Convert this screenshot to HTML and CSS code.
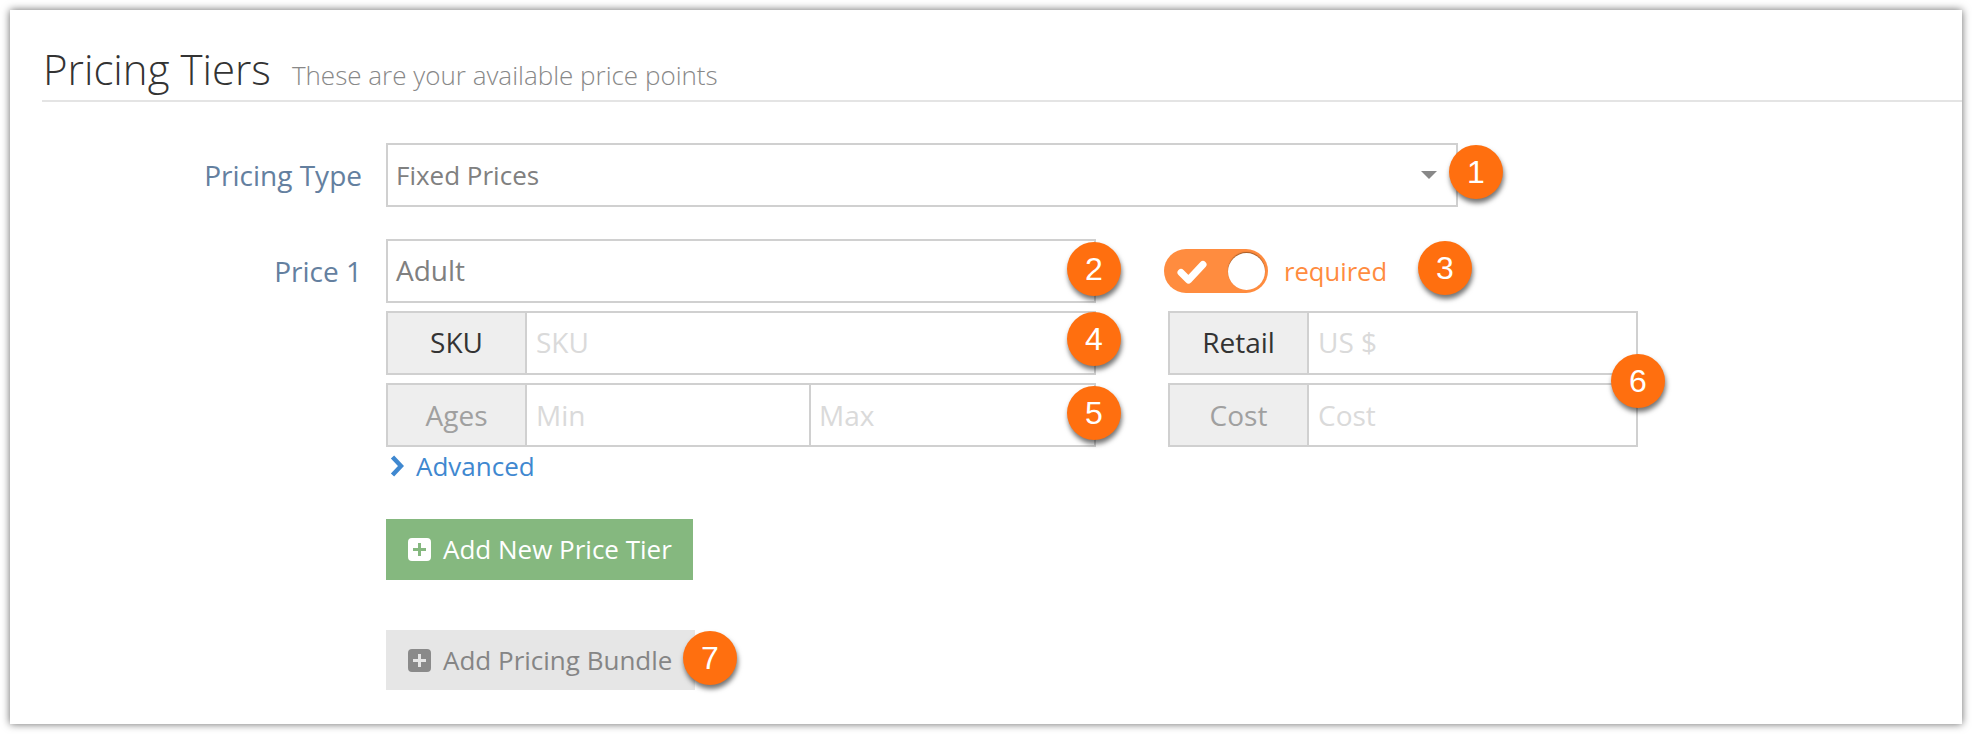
FILE: index.html
```html
<!DOCTYPE html>
<html lang="en">
<head>
<meta charset="utf-8">
<title>Pricing Tiers</title>
<link rel="stylesheet" href="styles.css">
</head>
<body>
<main class="card">
  <header class="head">
    <h1 class="title">Pricing Tiers</h1>
    <span class="subtitle">These are your available price points</span>
  </header>

  <div class="row row-type">
    <label class="label">Pricing Type</label>
    <div class="field select">
      <span class="value small">Fixed Prices</span>
      <span class="caret"></span>
      <span class="badge badge-1">1</span>
    </div>
  </div>

  <div class="row row-price">
    <label class="label">Price 1</label>
    <div class="price-grid">
      <div class="field">
        <span class="value">Adult</span>
        <span class="badge badge-2">2</span>
      </div>
      <div class="toggle-row">
        <span class="toggle">
          <svg class="check" viewBox="0 0 30 25" aria-hidden="true"><path d="M4 13.5 11.5 21 26 5.5" fill="none" stroke="#fff" stroke-width="7" stroke-linejoin="round" stroke-linecap="round"/></svg>
          <span class="knob"></span>
        </span>
        <span class="required">required</span>
        <span class="badge badge-3">3</span>
      </div>
      <div class="field">
        <span class="addon">SKU</span>
        <span class="value placeholder">SKU</span>
        <span class="badge badge-4">4</span>
      </div>
      <div class="field">
        <span class="addon">Retail</span>
        <span class="value placeholder">US $</span>
        <span class="badge badge-6">6</span>
      </div>
      <div class="field field-low">
        <span class="addon muted">Ages</span>
        <span class="value placeholder half">Min</span>
        <span class="value placeholder half divided">Max</span>
        <span class="badge badge-5">5</span>
      </div>
      <div class="field field-low">
        <span class="addon muted">Cost</span>
        <span class="value placeholder">Cost</span>
      </div>
    </div>
  </div>

  <div class="actions">
    <a class="advanced">
      <svg class="chevron" viewBox="0 0 14 24" aria-hidden="true"><path d="M2.5 3 11 12 2.5 21" fill="none" stroke="#3f88d0" stroke-width="4.5"/></svg>
      <span>Advanced</span>
    </a>
    <button class="btn btn-green">
      <svg class="plus" viewBox="0 0 23 23" aria-hidden="true"><path fill-rule="evenodd" fill="#fff" d="M4 0h15a4 4 0 0 1 4 4v15a4 4 0 0 1-4 4H4a4 4 0 0 1-4-4V4a4 4 0 0 1 4-4zM10 5v5H5v3h5v5h3v-5h5v-3h-5V5z"/></svg>
      <span class="btn-text">Add New Price Tier</span>
    </button>
    <button class="btn btn-gray">
      <svg class="plus" viewBox="0 0 23 23" aria-hidden="true"><path fill-rule="evenodd" fill="#8a8a8a" d="M4 0h15a4 4 0 0 1 4 4v15a4 4 0 0 1-4 4H4a4 4 0 0 1-4-4V4a4 4 0 0 1 4-4zM10 5v5H5v3h5v5h3v-5h5v-3h-5V5z"/></svg>
      <span class="btn-text">Add Pricing Bundle</span>
      <span class="badge badge-7">7</span>
    </button>
  </div>
</main>
</body>
</html>
```
FILE: styles.css
```css
* { box-sizing: border-box; }

html, body { height: 100%; }

body {
  margin: 0;
  padding: 10px;
  background: #fff;
  font-family: "Open Sans", "Liberation Sans", sans-serif;
  overflow: hidden;
}

.card {
  height: 714px;
  background: #fff;
  box-shadow: 0 0 8px rgba(0, 0, 0, .6);
  padding-top: 34px;
}

.head {
  display: flex;
  align-items: baseline;
  gap: 21px;
  height: 58px;
  margin-left: 32px;
  padding-left: 1px;
  border-bottom: 2px solid #e4e4e4;
}

.title {
  margin: 0;
  font-size: 42px;
  line-height: 50px;
  font-weight: 300;
  color: #333;
}

.subtitle {
  font-size: 26px;
  font-weight: 300;
  color: #888;
}

.row { display: flex; }

.row-type { margin-top: 41px; }
.row-price { margin-top: 32px; }

.label {
  width: 352px;
  margin-right: 24px;
  text-align: right;
  font-size: 28px;
  line-height: 64px;
  color: #64809f;
}

.field {
  position: relative;
  display: flex;
  height: 64px;
  border: 2px solid #d0d0d0;
  background: #fff;
}

.select { width: 1072px; }

.value {
  flex: 1;
  padding-left: 8px;
  font-size: 28px;
  line-height: 58px;
  color: #808080;
}

.field-low .value,
.field-low .addon { line-height: 60px; }

.small { font-size: 26px; line-height: 60px; }

.placeholder { color: #dadada; }

.half { flex: none; width: 281px; }

.divided {
  width: auto;
  flex: 1;
  border-left: 2px solid #d0d0d0;
}

.caret {
  align-self: center;
  margin-right: 19px;
  width: 0;
  height: 0;
  border-left: 8px solid transparent;
  border-right: 8px solid transparent;
  border-top: 8px solid #888;
}

.price-grid {
  display: grid;
  grid-template-columns: 710px 470px;
  grid-auto-rows: 64px;
  column-gap: 72px;
  row-gap: 8px;
}

.addon {
  flex: none;
  width: 139px;
  margin-right: 1px;
  border-right: 2px solid #d0d0d0;
  background: #eee;
  text-align: center;
  font-size: 28px;
  line-height: 58px;
  color: #333;
}

.addon.muted { color: #a0a0a0; }

.toggle-row {
  position: relative;
  display: flex;
  align-items: center;
  margin-left: -4px;
}

.toggle {
  display: flex;
  align-items: center;
  justify-content: space-between;
  width: 104px;
  height: 44px;
  padding: 0 3px 0 13px;
  border-radius: 22px;
  background: #ff8c3f;
}

.check { width: 30px; height: 25px; }

.knob {
  width: 37px;
  height: 37px;
  border-radius: 50%;
  background: #fff;
  box-shadow: 0 -1px 1px rgba(120, 70, 30, .7);
}

.required {
  margin-left: 16px;
  font-size: 25.6px;
  color: #ff8c3f;
}

.actions {
  display: flex;
  flex-direction: column;
  align-items: flex-start;
  margin-left: 376px;
}

.advanced {
  display: flex;
  align-items: center;
  height: 38px;
  padding-left: 4px;
  gap: 12px;
  font-size: 26px;
  color: #3f88d0;
}

.chevron { width: 14px; height: 24px; }

.btn {
  position: relative;
  display: flex;
  align-items: center;
  gap: 12px;
  padding: 0 0 0 22px;
  border: 0;
  font-family: inherit;
  font-size: 26px;
}

.btn-text { margin-top: -2px; }

.btn-gray .btn-text { margin-top: 0; }

.plus { width: 23px; height: 23px; flex: none; }

.btn-green {
  width: 307px;
  height: 61px;
  margin-top: 34px;
  background: #85b87f;
  color: #fff;
}

.btn-gray {
  width: 309px;
  height: 60px;
  margin-top: 50px;
  background: #e6e6e6;
  color: #858585;
}

.badge {
  position: absolute;
  width: 54px;
  height: 54px;
  border-radius: 50%;
  background: #ff6f0f;
  box-shadow: 1px 4px 5px rgba(0, 0, 0, .55);
  text-align: center;
  font-family: "Liberation Sans", Arial, sans-serif;
  font-size: 32px;
  font-weight: 400;
  line-height: 54px;
  color: #fff;
}

.badge-1 { right: -47px; top: 0; }
.badge-2 { right: -27px; top: 1px; }
.badge-3 { left: 254px; top: 2px; }
.badge-4 { right: -27px; top: -1px; }
.badge-5 { right: -27px; top: 1px; }
.badge-6 { right: -29px; top: 41px; z-index: 1; }
.badge-7 { right: -42px; top: 1px; }
```
